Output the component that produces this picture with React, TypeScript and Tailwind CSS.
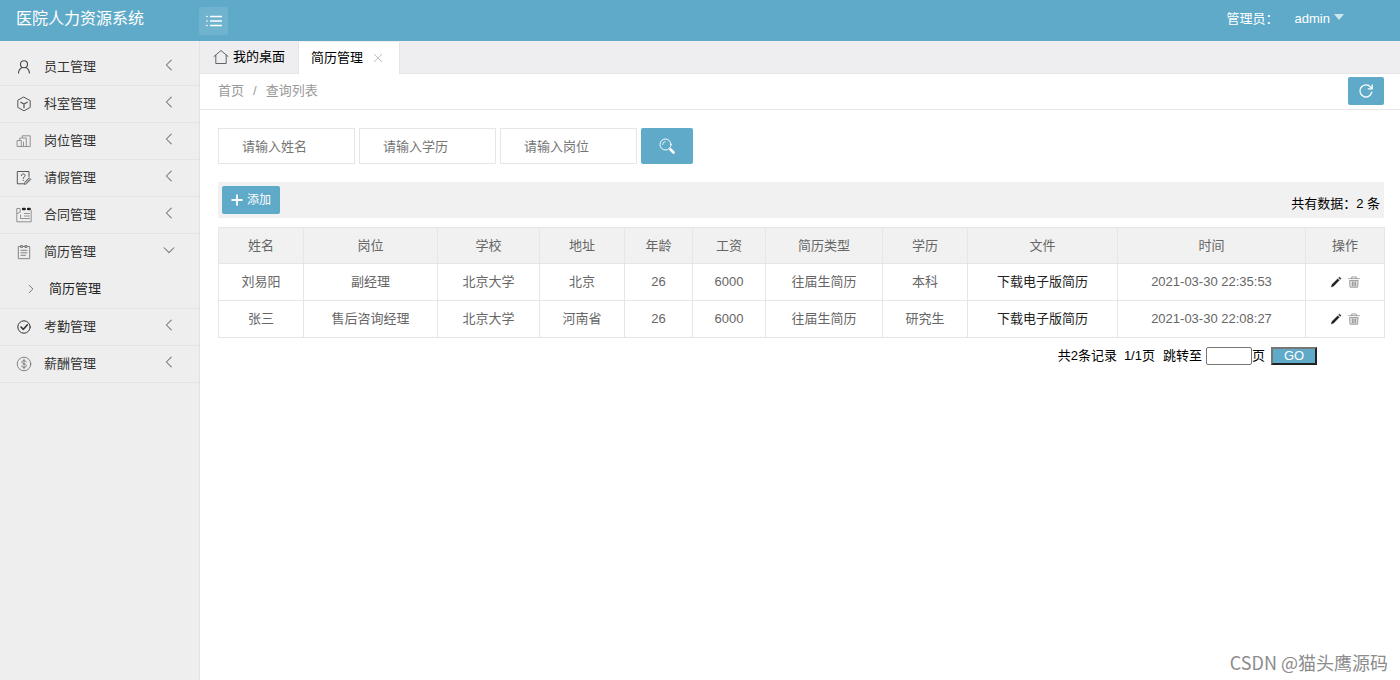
import React from 'react';

interface MenuItem {
  label: string;
  icon: React.ReactNode;
  children?: string[];
}

interface Resume {
  name: string;
  post: string;
  school: string;
  address: string;
  age: number;
  salary: number;
  type: string;
  degree: string;
  time: string;
}

const Icon: React.FC<{ className?: string; children: React.ReactNode }> = ({ className = 'size-4', children }) => (
  <svg viewBox="0 0 16 16" fill="none" stroke="currentColor" strokeLinecap="round" strokeLinejoin="round" className={`shrink-0 ${className}`} aria-hidden="true">
    {children}
  </svg>
);

const MENU: MenuItem[] = [
  {
    label: '员工管理',
    icon: (
      <Icon className="size-4 text-[#444]">
        <circle cx="8" cy="5.2" r="3.5" strokeWidth="1.1" />
        <path d="M2.5 14c.2-2.600 1.600-4.600 3.700-5.500M9.800 8.500c2.100.8 3.400 2.900 3.600 5.500" strokeWidth="1.1" />
      </Icon>
    ),
  },
  {
    label: '科室管理',
    icon: (
      <Icon className="size-4 text-[#555]">
        <path d="M8 1.200l6.200 3.400v6.800L8 14.800l-6.200-3.400V4.600z" />
        <path d="M4.800 6.200L8 8l3.200-1.800M8 8v3.800" strokeWidth="1.200" />
      </Icon>
    ),
  },
  {
    label: '岗位管理',
    icon: (
      <Icon className="size-4 text-[#888]">
        <path d="M6.300 4.500V2.800h7.900v10.700h-3.400M3.800 7.300V5h6.500v8.500" strokeWidth=".9" />
        <rect x="1.500" y="7.500" width="3.800" height="6" strokeWidth=".9" />
        <path d="M5.500 13.500h4.800M7.500 9v4" strokeWidth=".9" />
      </Icon>
    ),
  },
  {
    label: '请假管理',
    icon: (
      <Icon className="size-4 text-[#555]">
        <path d="M13 6.500V1.500H1.300v12.300h6.200" />
        <path d="M5.300 5.600c0-2.300 3.800-2.200 3.800 0 0 1.300-1.900 1.400-1.900 2.900M7.200 10.300v.3" />
        <path d="M8.500 14l.5-2.200L13.300 7.800l1.500 1.600-4.200 4.200zM10.300 12.300l3-2.900" strokeWidth=".9" />
      </Icon>
    ),
  },
  {
    label: '合同管理',
    icon: (
      <Icon className="size-4 text-[#888]">
        <path d="M3.500 1.500H.8v13.300h14.400V3.500M4.200 2v3.200L1.300 6.500M4.500 8v3.500h9M8.500 6.500h5M8.500 9h5" strokeWidth=".9" />
        <path d="M7.200 2h1.400M12.200 2h1.400" stroke="#222" strokeWidth="2.600" />
      </Icon>
    ),
  },
  {
    label: '简历管理',
    icon: (
      <Icon className="size-4 text-[#777]">
        <path d="M5 2.500H2.300v12.200h11.400V2.500H11M6.700 2.500h2.600M5 1.500h1.700v2H5zM9.300 1.500H11v2H9.300z" strokeWidth=".9" />
        <path d="M5 6.300h6M5 8.800h6M5 11.300h4.500" strokeWidth=".9" />
      </Icon>
    ),
    children: ['简历管理'],
  },
  {
    label: '考勤管理',
    icon: (
      <Icon className="size-4 text-[#333]">
        <circle cx="8" cy="8" r="6.200" />
        <path d="M5 8l2.400 2.300 4-4.500" strokeWidth="1.600" />
      </Icon>
    ),
  },
  {
    label: '薪酬管理',
    icon: (
      <Icon className="size-4 text-[#777]">
        <circle cx="8" cy="8" r="6.800" strokeWidth=".9" />
        <path d="M10.200 6c-.3-1-1.100-1.400-2.200-1.400-2.900 0-2.900 3 0 3.300 3.200.4 3 3.600 0 3.600-1.300 0-2.100-.6-2.300-1.600M8 3.300v9.500" strokeWidth=".9" />
      </Icon>
    ),
  },
];

const COLUMNS = [
  { title: '姓名', width: 'w-[85px]' },
  { title: '岗位', width: 'w-[134px]' },
  { title: '学校', width: 'w-[102px]' },
  { title: '地址', width: 'w-[85px]' },
  { title: '年龄', width: 'w-[68px]' },
  { title: '工资', width: 'w-[73px]' },
  { title: '简历类型', width: 'w-[117px]' },
  { title: '学历', width: 'w-[85px]' },
  { title: '文件', width: 'w-[150px]' },
  { title: '时间', width: 'w-[188px]' },
  { title: '操作', width: 'w-[79px]' },
];

const RESUMES: Resume[] = [
  { name: '刘易阳', post: '副经理', school: '北京大学', address: '北京', age: 26, salary: 6000, type: '往届生简历', degree: '本科', time: '2021-03-30 22:35:53' },
  { name: '张三', post: '售后咨询经理', school: '北京大学', address: '河南省', age: 26, salary: 6000, type: '往届生简历', degree: '研究生', time: '2021-03-30 22:08:27' },
];

const SEARCH_FIELDS = ['请输入姓名', '请输入学历', '请输入岗位'];

const Header: React.FC = () => (
  <header className="flex h-[41px] items-center bg-[#5faac9] text-white">
    <a href="#home" className="w-[199px] pb-1 pl-4 text-base">医院人力资源系统</a>
    <button type="button" aria-label="菜单" className="flex h-7 w-[29px] items-center justify-center rounded-xs bg-white/10">
      <Icon>
        <path d="M4.500 3.500h11M4.500 8h11M4.500 12.500h11M.8 3.500h.4M.8 8h.4M.8 12.500h.4" strokeWidth="1.300" />
      </Icon>
    </button>
    <div className="ml-auto flex items-center pr-14 pb-1">
      <span>管理员：</span>
      <button type="button" className="ml-4 flex items-center gap-1">
        admin
        <span className="mb-1 border-x-[5px] border-t-[6px] border-x-transparent border-t-white/70" />
      </button>
    </div>
  </header>
);

const Sidebar: React.FC = () => (
  <nav className="w-[200px] shrink-0 border-r border-[#e2e2e2] bg-[#eeeeee] pt-2">
    <ul>
      {MENU.map((item) => (
        <li key={item.label} className="border-b border-[#e4e4e4]">
          <a href="#menu" className="flex h-9 items-center pl-4">
            {item.icon}
            <span className="ml-3 text-[#333]">{item.label}</span>
            <Icon className="mr-6 mb-1 ml-auto size-3 text-[#777]">
              {item.children ? <path d="M1.500 5L8 11.500 14.500 5" strokeWidth="1.400" /> : <path d="M11 1.500L4.500 8l6.500 6.500" strokeWidth="1.400" />}
            </Icon>
          </a>
          {item.children?.map((child) => (
            <a key={child} href="#child" className="flex h-[38px] items-center pl-[26px]">
              <Icon className="size-[10px] text-[#777]">
                <path d="M5 2l6 6-6 6" strokeWidth="1.600" />
              </Icon>
              <span className="ml-[13px] text-[#222]">{child}</span>
            </a>
          ))}
        </li>
      ))}
    </ul>
  </nav>
);

const Tabs: React.FC = () => (
  <div className="flex h-[33px] items-end border-b border-[#e6e6e6] bg-[#eeeef0]">
    <button type="button" className="flex h-8 w-[98px] items-center gap-1 pl-[13px] text-black">
      <Icon className="size-4 text-[#555]">
        <path d="M1 7.500L8 1.500l7 6M2.800 6.200v8.300h10.400V6.200" strokeWidth=".9" />
      </Icon>
      我的桌面
    </button>
    <div className="-mb-px flex h-8 w-[102px] items-center border-x border-[#e6e6e6] bg-white pl-3">
      <button type="button" className="text-black">简历管理</button>
      <button type="button" aria-label="关闭" className="ml-[10px] text-[#bbb]">
        <Icon className="size-[10px]">
          <path d="M2 2l12 12M14 2L2 14" strokeWidth="1.500" />
        </Icon>
      </button>
    </div>
  </div>
);

const ResumeTable: React.FC = () => (
  <table className="mt-[9px] w-full table-fixed border-collapse text-center text-[#666]">
    <thead>
      <tr className="h-9 bg-[#f1f1f1]">
        {COLUMNS.map((column) => (
          <th key={column.title} className={`${column.width} border border-[#e6e6e6] font-normal`}>{column.title}</th>
        ))}
      </tr>
    </thead>
    <tbody>
      {RESUMES.map((row) => (
        <tr key={row.name} className="h-[37px] *:border *:border-[#e6e6e6]">
          <td>{row.name}</td>
          <td>{row.post}</td>
          <td>{row.school}</td>
          <td>{row.address}</td>
          <td>{row.age}</td>
          <td>{row.salary}</td>
          <td>{row.type}</td>
          <td>{row.degree}</td>
          <td><a href="#download" className="text-[#222]">下载电子版简历</a></td>
          <td>{row.time}</td>
          <td>
            <div className="flex items-center justify-center gap-[6px]">
              <button type="button" aria-label="编辑" className="text-[#222]">
                <Icon className="size-3">
                  <path d="M1.500 14.500l1-3.300 7.800-7.700 2.200 2.200L4.800 13.500zM11.400 2.300l1.200-1.100 2.200 2.200-1.100 1.200z" fill="currentColor" strokeWidth=".3" />
                </Icon>
              </button>
              <button type="button" aria-label="删除" className="text-[#888]">
                <Icon className="size-3">
                  <path d="M2.500 6h11l-.7 9H3.200z" fill="currentColor" fillOpacity=".3" stroke="none" />
                  <path d="M.8 3.500h14.400M5 3.300V1.200h6v2.100M2.500 6h11l-.7 9H3.200zM6 8v5M8 8v5M10 8v5" />
                </Icon>
              </button>
            </div>
          </td>
        </tr>
      ))}
    </tbody>
  </table>
);

const Pagination: React.FC = () => (
  <div className="mt-[9px] flex h-[18px] items-center justify-end pr-[67px] text-black">
    <span>共2条记录</span>
    <span className="ml-[7px]">1/1页</span>
    <label htmlFor="page" className="ml-2">跳转至</label>
    <input id="page" type="text" className="ml-1 h-[18px] w-[46px] rounded-xs border border-[#767676] bg-white px-1" />
    <span>页</span>
    <button type="button" className="ml-[6px] flex h-[18px] w-[46px] items-center justify-center border-2 border-t-[#767676] border-r-[#222] border-b-[#222] border-l-[#767676] bg-[#5faac9] text-white">GO</button>
  </div>
);

const App: React.FC = () => {
  return (
    <div className="relative flex min-h-screen flex-col bg-white font-['Liberation_Sans','Noto_Sans_CJK_SC',sans-serif] text-[13px] leading-5">
      <Header />
      <div className="flex flex-1">
        <Sidebar />
        <main className="min-w-0 flex-1">
          <Tabs />
          <div className="flex h-9 items-center justify-between border-b border-[#e6e6e6] pr-4 pb-px pl-[18px] text-[#999]">
            <div className="flex gap-[9px]">
              <a href="#home">首页</a>
              <span>/</span>
              <a href="#list">查询列表</a>
            </div>
            <button type="button" aria-label="刷新" className="flex h-7 w-9 items-center justify-center rounded-xs bg-[#5faac9] text-white">
              <Icon>
                <path d="M13.800 9.200A6 6 0 1 1 12.600 4.200l1.200 1.300M14.200 1.800v4h-4" strokeWidth="1.300" />
              </Icon>
            </button>
          </div>

          <div className="pt-[18px] pr-4 pl-[18px]">
            <form className="flex gap-1">
              {SEARCH_FIELDS.map((field) => (
                <input key={field} type="text" placeholder={field} aria-label={field} className="h-9 w-[137px] border border-[#e6e6e6] px-[23px] placeholder:text-[#757575]" />
              ))}
              <button type="button" aria-label="搜索" className="flex h-9 w-[52px] items-center justify-center rounded-xs bg-[#5faac9] text-white">
                <Icon>
                  <circle cx="6.500" cy="6.500" r="5.500" />
                  <path d="M3.600 6.500a3 3 0 0 1 2.500-3" strokeWidth=".8" />
                  <path d="M11.500 11.500l3 3" strokeWidth="2.600" />
                </Icon>
              </button>
            </form>

            <div className="mt-[18px] flex h-9 items-center justify-between bg-[#f1f1f1] px-1">
              <button type="button" className="flex h-7 w-[58px] items-center justify-center gap-1 rounded-xs bg-[#5faac9] text-xs text-white">
                <Icon className="size-3">
                  <path d="M8 1.500v13M1.500 8h13" strokeWidth="2.400" />
                </Icon>
                添加
              </button>
              <span className="pt-2 text-black">共有数据：2 条</span>
            </div>

            <ResumeTable />
            <Pagination />
          </div>
        </main>
      </div>
      <div className="absolute right-3 bottom-1 font-['Noto_Sans_CJK_SC',sans-serif] text-lg leading-7 text-[#8c8c8c]">CSDN @猫头鹰源码</div>
    </div>
  );
};

export default App;
